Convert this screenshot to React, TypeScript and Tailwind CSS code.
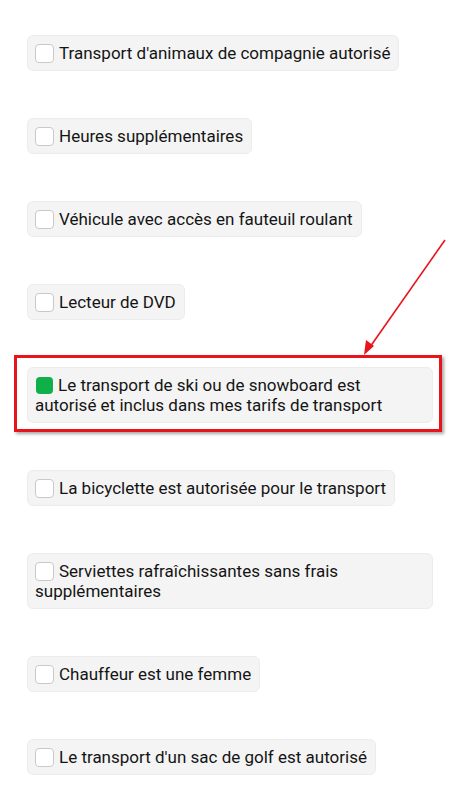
import React from 'react';

interface Option {
    label: string;
    checked?: boolean;
    highlighted?: boolean;
}

const options: Option[] = [
    { label: "Transport d'animaux de compagnie autorisé" },
    { label: 'Heures supplémentaires' },
    { label: 'Véhicule avec accès en fauteuil roulant' },
    { label: 'Lecteur de DVD' },
    { label: 'Le transport de ski ou de snowboard est autorisé et inclus dans mes tarifs de transport', checked: true, highlighted: true },
    { label: 'La bicyclette est autorisée pour le transport' },
    { label: 'Serviettes rafraîchissantes sans frais supplémentaires' },
    { label: 'Chauffeur est une femme' },
    { label: "Le transport d'un sac de golf est autorisé" },
];

function OptionItem({ option }: { option: Option }) {
    return (
        <div className="relative self-start max-w-[406px]">
            {/* Annotation frame around the selected option */}
            {option.highlighted && (
                <div className="absolute -top-[12px] -left-[13px] -right-[9px] -bottom-[9px] border-[3px] border-[#e8141b] shadow-[2px_2px_3px_rgba(0,0,0,0.35)] pointer-events-none" />
            )}
            <label className="block rounded-md bg-[#f4f4f4] border border-[#ececec] pl-[7px] pr-2 py-[7px] text-[17px] leading-5 text-[#141414]">
                {option.checked ? (
                    <span className="inline-block w-[17px] h-[17px] mr-[5px] ml-[1px] align-[-3px] rounded-[4px] bg-[#0fb04a]" />
                ) : (
                    <span className="inline-block w-[19px] h-[19px] mr-[5px] align-[-4px] rounded-[4px] bg-white border border-[#c9c9c9]" />
                )}
                {option.label}
            </label>
        </div>
    );
}

export default function App() {
    return (
        <div className="relative w-[461px] min-h-[799px] bg-white" style={{ fontFamily: 'Roboto, "Liberation Sans", sans-serif' }}>
            <div className="flex flex-col gap-[47px] pt-[35px] pl-[27px] pr-[28px] pb-8">
                {options.map((option, i) => (
                    <OptionItem key={i} option={option} />
                ))}
            </div>

            {/* Arrow pointing at the highlighted option */}
            <svg className="absolute left-0 top-0 pointer-events-none" width="461" height="799">
                <line x1="445" y1="240" x2="370" y2="347" stroke="#e8141b" strokeWidth="1.6" />
                <polygon points="364,355 366,340 374,346" fill="#e8141b" />
            </svg>
        </div>
    );
}
